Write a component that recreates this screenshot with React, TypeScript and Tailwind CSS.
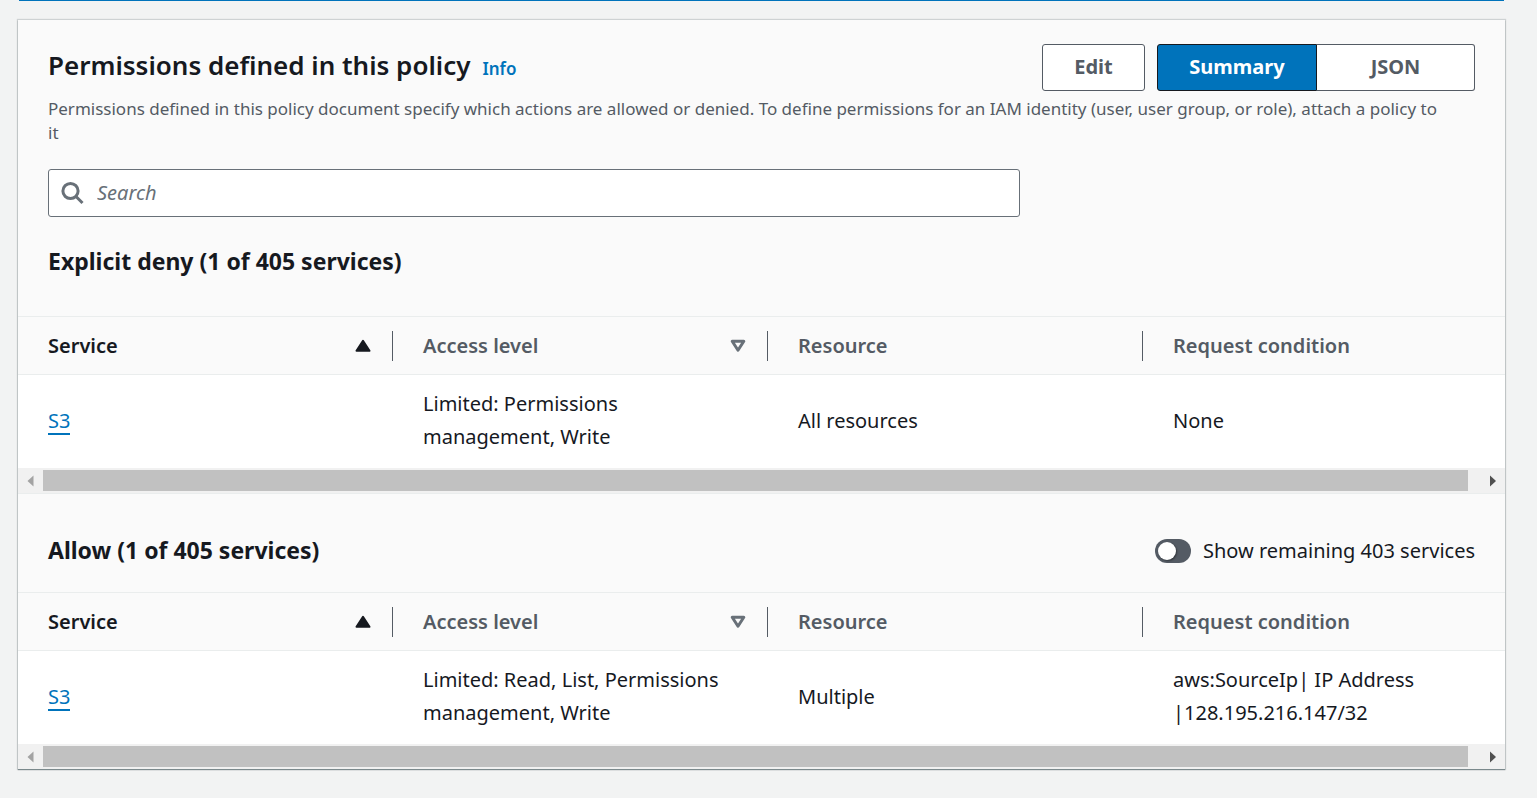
import { useState } from "react";

type Row = { service: string; access: string[]; resource: string; condition: string[] };

function Lines({ lines }: { lines: string[] }) {
  return (
    <>
      {lines.map((line) => (
        <span key={line} className="block">
          {line}
        </span>
      ))}
    </>
  );
}

function SortAscending() {
  return (
    <svg className="h-6 w-6" viewBox="0 0 24 24" aria-hidden="true">
      <path d="M12 6.8 L18.5 16.8 H5.5 Z" fill="#16191f" stroke="#16191f" strokeWidth="2" strokeLinejoin="round" />
    </svg>
  );
}

function SortNone() {
  return (
    <svg className="h-6 w-6" viewBox="0 0 24 24" aria-hidden="true">
      <path d="M6.2 7.3 H17.8 L12 16.2 Z" fill="none" stroke="#687078" strokeWidth="3" strokeLinejoin="round" />
    </svg>
  );
}

function ScrollBar() {
  return (
    <div className="flex h-[25px] items-center bg-[#f1f1f1]">
      <button type="button" aria-label="Scroll left" className="flex w-[25px] justify-center">
        <svg className="h-3 w-2" viewBox="0 0 8 12" aria-hidden="true">
          <path d="M6.5 0.5 V11.5 L0.5 6 Z" fill="#a3a3a3" />
        </svg>
      </button>
      <div className="mr-3 h-[21px] flex-1 bg-[#c1c1c1]" />
      <button type="button" aria-label="Scroll right" className="flex w-[25px] justify-center">
        <svg className="h-3 w-2" viewBox="0 0 8 12" aria-hidden="true">
          <path d="M1 0.5 V11.5 L7 6 Z" fill="#505050" />
        </svg>
      </button>
    </div>
  );
}

function ServicesTable({ label, row }: { label: string; row: Row }) {
  const heading = "flex h-[57px] items-center pl-[30px] font-semibold text-[#545b64]";
  const inner = "flex h-[30px] flex-1 items-center justify-between border-r border-[#545b64] pr-[17px]";
  const cell = "px-[30px] pt-3 pb-[15px] align-middle";
  return (
    <div className="border-t border-[#eaeded]">
      <div className="overflow-hidden">
        <table aria-label={label} className="w-full min-w-[1500px] table-fixed border-collapse text-left text-xl leading-[33px]">
          <thead>
            <tr className="border-b border-[#eaeded]">
              <th className="p-0" aria-sort="ascending">
                <div className={heading}>
                  <div className={inner}>
                    <button type="button" className="flex flex-1 items-center justify-between text-[#16191f]">
                      Service
                      <SortAscending />
                    </button>
                  </div>
                </div>
              </th>
              <th className="p-0">
                <div className={heading}>
                  <div className={inner}>
                    <button type="button" className="flex flex-1 items-center justify-between">
                      Access level
                      <SortNone />
                    </button>
                  </div>
                </div>
              </th>
              <th className="p-0">
                <div className={heading}>
                  <div className={inner}>Resource</div>
                </div>
              </th>
              <th className="p-0">
                <div className={heading}>Request condition</div>
              </th>
            </tr>
          </thead>
          <tbody className="bg-white">
            <tr>
              <td className={cell}>
                <a href="#s3" className="inline-block border-b-2 border-[#0073bb] leading-6 text-[#0073bb]">
                  {row.service}
                </a>
              </td>
              <td className={cell}>
                <Lines lines={row.access} />
              </td>
              <td className={cell}>{row.resource}</td>
              <td className={cell}>
                <Lines lines={row.condition} />
              </td>
            </tr>
          </tbody>
        </table>
      </div>
      <ScrollBar />
    </div>
  );
}

export default function App() {
  const [showAll, setShowAll] = useState(false);
  return (
    <div className="min-h-screen bg-[#f2f3f3] pr-8 pl-[18px] font-['Noto_Sans',sans-serif] text-[#16191f]">
      <div className="mx-px h-px bg-[#0073bb]" />
      <main className="mt-[19px] bg-[#fafafa] shadow-[0_1px_1px_0_rgba(0,28,36,0.4),0_0_1px_1px_rgba(0,28,36,0.15)]">
        <header className="px-[30px] pt-6">
          <div className="flex items-start justify-between">
            <div className="flex items-baseline gap-3">
              <h2 className="text-[26px] leading-[43px] font-semibold">Permissions defined in this policy</h2>
              <a href="#info" className="text-[17px] font-semibold text-[#0073bb]">
                Info
              </a>
            </div>
            <div className="flex gap-3 text-xl font-bold text-[#545b64]">
              <button type="button" className="h-[47px] w-[103px] rounded-[3px] border border-[#545b64] bg-white pb-0.5">
                Edit
              </button>
              <div className="flex">
                <button type="button" aria-pressed="true" className="h-[47px] w-40 rounded-l-[3px] border border-[#16191f] bg-[#0073bb] pb-0.5 text-white">
                  Summary
                </button>
                <button type="button" aria-pressed="false" className="h-[47px] w-[158px] rounded-r-[3px] border border-l-0 border-[#545b64] bg-white pb-0.5">
                  JSON
                </button>
              </div>
            </div>
          </div>
          <p className="mt-1.5 pr-8 text-[17px] leading-6 text-[#545b64]">
            Permissions defined in this policy document specify which actions are allowed or denied. To define permissions for an IAM identity (user, user group, or role), attach a policy to it
          </p>
          <label className="mt-6 flex h-12 w-[68.1%] items-center gap-3 rounded-[3px] border border-[#687078] bg-white pl-3">
            <svg className="h-6 w-6" viewBox="0 0 24 24" fill="none" stroke="#687078" strokeWidth="3" aria-hidden="true">
              <circle cx="9.5" cy="10" r="7.6" />
              <path d="M15 15.5 L21.5 22" />
            </svg>
            <input type="search" aria-label="Search" placeholder="Search" className="min-w-0 flex-1 bg-transparent text-xl outline-none placeholder:text-[#687078] placeholder:italic" />
          </label>
          <h3 className="mt-7 pb-[38px] text-[23px] leading-[33px] font-bold">Explicit deny (1 of 405 services)</h3>
        </header>
        <ServicesTable
          label="Explicit deny"
          row={{ service: "S3", access: ["Limited: Permissions", "management, Write"], resource: "All resources", condition: ["None"] }}
        />
        <div className="flex h-[99px] items-center justify-between border-t border-[#eaeded] px-[30px] pt-4">
          <h3 className="pb-0.5 text-[23px] leading-[33px] font-bold">Allow (1 of 405 services)</h3>
          <label className="flex cursor-pointer items-center gap-3 text-xl">
            <input
              type="checkbox"
              role="switch"
              checked={showAll}
              onChange={(event) => setShowAll(event.target.checked)}
              className="h-6 w-9 appearance-none rounded-full bg-[#545b64] p-[3px] before:block before:h-[18px] before:w-[18px] before:rounded-full before:bg-white before:shadow-[1px_1px_2px_rgba(0,0,0,0.4)] checked:bg-[#0073bb] checked:before:ml-3"
            />
            Show remaining 403 services
          </label>
        </div>
        <ServicesTable
          label="Allow"
          row={{
            service: "S3",
            access: ["Limited: Read, List, Permissions", "management, Write"],
            resource: "Multiple",
            condition: ["aws:SourceIp| IP Address", "|128.195.216.147/32"],
          }}
        />
      </main>
    </div>
  );
}
